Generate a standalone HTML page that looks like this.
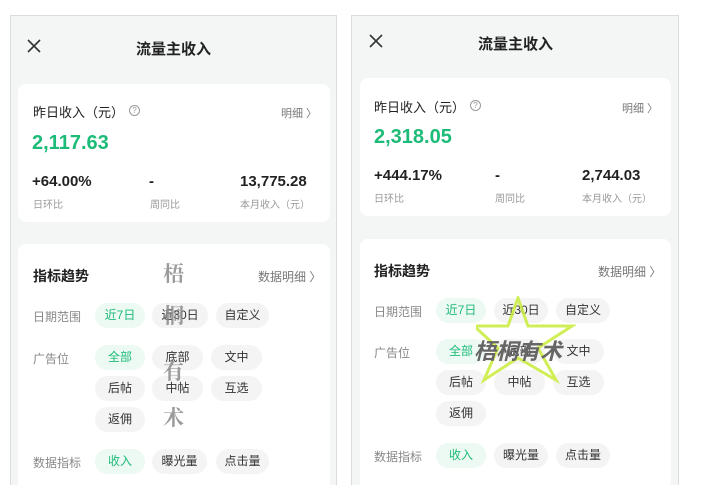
<!DOCTYPE html>
<html><head><meta charset="utf-8"><style>
*{margin:0;padding:0;box-sizing:border-box}
body{width:712px;height:479px;background:#fff;position:relative;overflow:hidden;font-family:"Liberation Sans","Noto Sans CJK SC",sans-serif;color:#222}
.p{position:absolute;background:#f4f5f5;border:1px solid #dcdcdc;border-bottom:none}
.a{position:absolute;white-space:nowrap}
.card{position:absolute;background:#fff;border-radius:8px}
.chip{position:absolute;height:25px;border-radius:13px;background:#f4f4f4;font-size:12px;color:#333;text-align:center;line-height:25px}
.g{background:#edf9f3;color:#1dbb78}
.lb{font-size:12px;color:#888}
.sm{font-size:10px;color:#999}
.big{font-size:15px;font-weight:bold;color:#222}
</style></head><body>

<!-- LEFT PANEL -->
<div class="p" style="left:10px;top:15px;width:327px;height:470px"></div>
<svg class="a" style="left:27px;top:39px" width="14" height="14"><path d="M1 1L13 13M13 1L1 13" stroke="#333" stroke-width="1.6"/></svg>
<div class="a" style="left:136px;top:38px;font-size:15px;font-weight:bold;color:#222">流量主收入</div>
<div class="card" style="left:18px;top:84px;width:312px;height:138px"></div>
<div class="a" style="left:33px;top:102px;font-size:13px;color:#222">昨日收入（元）</div>
<div class="a" style="left:129px;top:105px;width:11px;height:11px;border:1px solid #999;border-radius:50%;font-size:8px;color:#999;text-align:center;line-height:10px">?</div>
<div class="a" style="left:281px;top:105px;font-size:11px;color:#777">明细 〉</div>
<div class="a" style="left:32px;top:132px;font-size:20px;font-weight:bold;color:#1dbb78">2,117.63</div>
<div class="a big" style="left:32px;top:173px">+64.00%</div>
<div class="a big" style="left:149px;top:173px">-</div>
<div class="a big" style="left:240px;top:173px">13,775.28</div>
<div class="a sm" style="left:33px;top:196px">日环比</div>
<div class="a sm" style="left:150px;top:196px">周同比</div>
<div class="a sm" style="left:240px;top:196px">本月收入（元）</div>
<div class="card" style="left:18px;top:244px;width:312px;height:250px"></div>
<div class="a" style="left:33px;top:266px;font-size:14px;font-weight:bold">指标趋势</div>
<div class="a" style="left:258px;top:268px;font-size:12px;color:#777">数据明细 〉</div>
<div class="a lb" style="left:33px;top:308px">日期范围</div>
<div class="chip g" style="left:95px;top:303px;width:50px">近7日</div>
<div class="chip" style="left:152px;top:303px;width:56px">近30日</div>
<div class="chip" style="left:216px;top:303px;width:53px">自定义</div>
<div class="a lb" style="left:33px;top:350px">广告位</div>
<div class="chip g" style="left:95px;top:345px;width:50px">全部</div>
<div class="chip" style="left:152px;top:345px;width:51px">底部</div>
<div class="chip" style="left:211px;top:345px;width:51px">文中</div>
<div class="chip" style="left:95px;top:376px;width:50px">后帖</div>
<div class="chip" style="left:152px;top:376px;width:51px">中帖</div>
<div class="chip" style="left:211px;top:376px;width:51px">互选</div>
<div class="chip" style="left:95px;top:407px;width:50px">返佣</div>
<div class="a lb" style="left:33px;top:454px">数据指标</div>
<div class="chip g" style="left:95px;top:449px;width:50px">收入</div>
<div class="chip" style="left:152px;top:449px;width:55px">曝光量</div>
<div class="chip" style="left:216px;top:449px;width:53px">点击量</div>
<div class="a" style="left:163px;top:258px;font-size:21px;font-weight:bold;color:#8a8a8a;font-family:'Noto Serif CJK SC',serif;opacity:.85">梧</div>
<div class="a" style="left:163px;top:300px;font-size:21px;font-weight:bold;color:#8a8a8a;font-family:'Noto Serif CJK SC',serif;opacity:.85">桐</div>
<div class="a" style="left:163px;top:356px;font-size:21px;font-weight:bold;color:#8a8a8a;font-family:'Noto Serif CJK SC',serif;opacity:.85">有</div>
<div class="a" style="left:163px;top:402px;font-size:21px;font-weight:bold;color:#8a8a8a;font-family:'Noto Serif CJK SC',serif;opacity:.85">术</div>

<!-- RIGHT PANEL -->
<div class="p" style="left:351px;top:15px;width:328px;height:470px"></div>
<svg class="a" style="left:369px;top:34px" width="14" height="14"><path d="M1 1L13 13M13 1L1 13" stroke="#333" stroke-width="1.6"/></svg>
<div class="a" style="left:478px;top:33px;font-size:15px;font-weight:bold;color:#222">流量主收入</div>
<div class="card" style="left:360px;top:78px;width:311px;height:138px"></div>
<div class="a" style="left:374px;top:97px;font-size:13px;color:#222">昨日收入（元）</div>
<div class="a" style="left:470px;top:100px;width:11px;height:11px;border:1px solid #999;border-radius:50%;font-size:8px;color:#999;text-align:center;line-height:10px">?</div>
<div class="a" style="left:622px;top:100px;font-size:11px;color:#777">明细 〉</div>
<div class="a" style="left:374px;top:126px;font-size:20px;font-weight:bold;color:#1dbb78">2,318.05</div>
<div class="a big" style="left:374px;top:167px">+444.17%</div>
<div class="a big" style="left:495px;top:167px">-</div>
<div class="a big" style="left:582px;top:167px">2,744.03</div>
<div class="a sm" style="left:374px;top:190px">日环比</div>
<div class="a sm" style="left:495px;top:190px">周同比</div>
<div class="a sm" style="left:582px;top:190px">本月收入（元）</div>
<div class="card" style="left:360px;top:239px;width:311px;height:250px"></div>
<div class="a" style="left:374px;top:261px;font-size:14px;font-weight:bold">指标趋势</div>
<div class="a" style="left:598px;top:263px;font-size:12px;color:#777">数据明细 〉</div>
<div class="a lb" style="left:374px;top:303px">日期范围</div>
<div class="chip g" style="left:436px;top:298px;width:50px">近7日</div>
<div class="chip" style="left:494px;top:298px;width:54px">近30日</div>
<div class="chip" style="left:556px;top:298px;width:54px">自定义</div>
<div class="a lb" style="left:374px;top:344px">广告位</div>
<div class="chip g" style="left:436px;top:339px;width:50px">全部</div>
<div class="chip" style="left:494px;top:339px;width:51px">底部</div>
<div class="chip" style="left:553px;top:339px;width:51px">文中</div>
<div class="chip" style="left:436px;top:370px;width:50px">后帖</div>
<div class="chip" style="left:494px;top:370px;width:51px">中帖</div>
<div class="chip" style="left:553px;top:370px;width:51px">互选</div>
<div class="chip" style="left:436px;top:401px;width:50px">返佣</div>
<div class="a lb" style="left:374px;top:448px">数据指标</div>
<div class="chip g" style="left:436px;top:443px;width:50px">收入</div>
<div class="chip" style="left:494px;top:443px;width:54px">曝光量</div>
<div class="chip" style="left:556px;top:443px;width:54px">点击量</div>
<svg class="a" style="left:476px;top:296px" width="100" height="90"><path d="M42 2L52 30L96 30L62 52L80 84L42 62L8 84L22 52L-2 30L32 30Z" fill="none" stroke="#c8ec3a" stroke-width="3" stroke-linejoin="miter" opacity="0.85"/></svg>
<div class="a" style="left:474px;top:334px;font-size:22px;font-weight:bold;font-style:italic;color:#666">梧桐有术</div>
</body></html>
